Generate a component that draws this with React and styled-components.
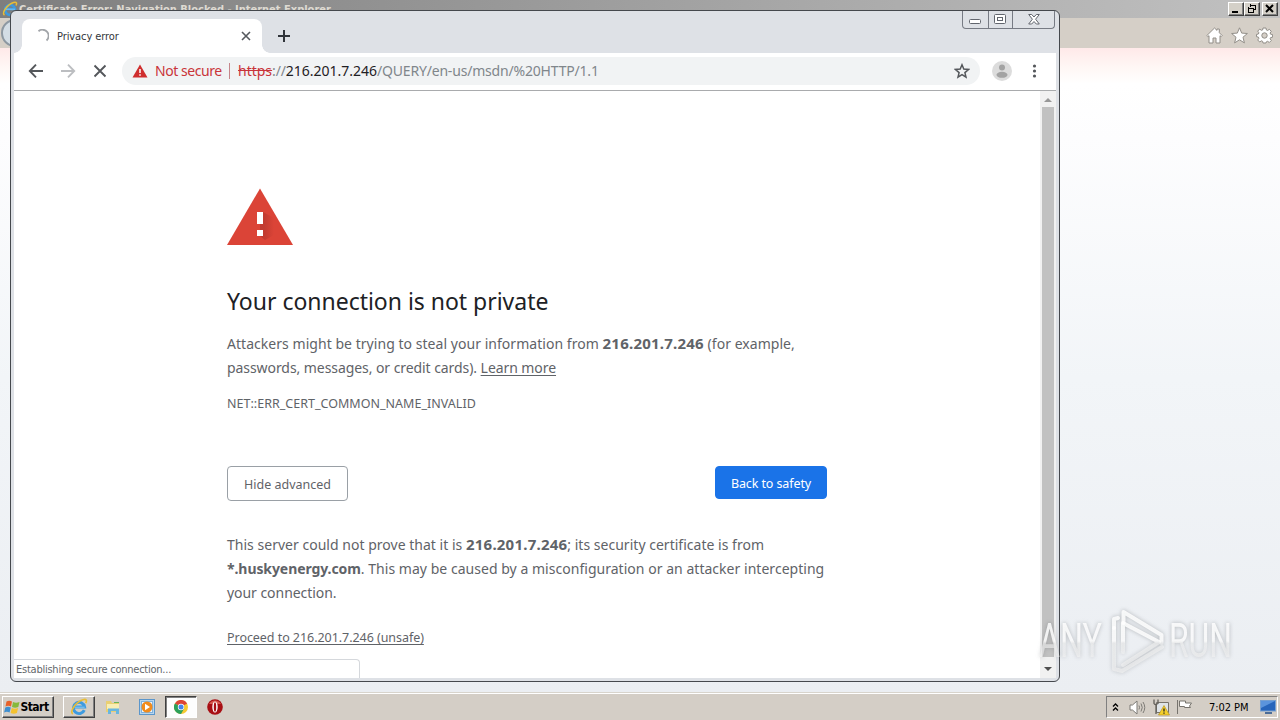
import React from "react";
import styled, { createGlobalStyle } from "styled-components";

const ui = `"DejaVu Sans Condensed", "DejaVu Sans", sans-serif`;
const segoe = `"Noto Sans", "Open Sans", sans-serif`;

const Global = createGlobalStyle`
  * { box-sizing: border-box; }
  body { margin: 0; overflow: hidden; font-family: ${ui}; }
  svg { display: block; flex: none; }
`;

const Desktop = styled.div`
  position: relative;
  width: 1280px;
  height: 720px;
  display: flex;
  flex-direction: column;
  overflow: hidden;
`;
const IeTitle = styled.div`
  height: 18px;
  flex: none;
  display: flex;
  align-items: center;
  padding: 0 2px;
  gap: 1px;
  background: linear-gradient(90deg, #7e7e7e, #c1c1c1);
`;
const IeTitleText = styled.div`
  flex: 1;
  font: bold 11px/18px ${ui};
  padding-top: 1px;
  color: #dedad2;
  letter-spacing: ${(p) => p.$ls}px;
  white-space: nowrap;
`;
const ClassicButton = styled.div`
  width: 16px;
  height: 14px;
  margin-left: ${(p) => p.$gap || 0}px;
  background: #d4d0c8;
  border: 1px solid;
  border-color: #fff #404040 #404040 #fff;
  box-shadow: inset -1px -1px #808080;
`;
const IeBar = styled.div`
  height: 30px;
  flex: none;
  display: flex;
  align-items: center;
  justify-content: flex-end;
  gap: 8px;
  padding: 4px 7px 0 0;
  background: #d5cfc7;
`;
const BackOrb = styled.div`
  width: 28px;
  height: 28px;
  margin: -5px auto 0 1px;
  border-radius: 50%;
  border: 2px solid #8d98a2;
  background: #d3dde5;
`;
const IePage = styled.div`
  flex: 1;
  background: linear-gradient(180deg, #ffe9e9 0, #fff6f4 18px, #fff 36px, #fdfdfe 90px, #f2f5f8 330px, #ebeef2 100%);
`;
const Taskbar = styled.div`
  height: 28px;
  flex: none;
  display: flex;
  align-items: flex-start;
  padding: 3px 2px 0 2px;
  background: #d4cec6;
  border-top: 1px solid #d8d4cc;
  box-shadow: inset 0 1px #fff;
`;
const TaskButton = styled.div`
  width: ${(p) => p.$w}px;
  height: 22px;
  margin-left: ${(p) => p.$gap || 0}px;
  display: flex;
  align-items: center;
  justify-content: center;
  font: bold 12px/20px ${ui};
  letter-spacing: -0.5px;
  color: #000;
  border: 1px solid transparent;
  ${(p) => p.$kind === "raised" && `border-color: #fff #404040 #404040 #fff; box-shadow: inset -1px -1px #808080;`}
  ${(p) => p.$kind === "pressed" && `border-color: #404040 #fff #fff #404040; box-shadow: inset 1px 1px #808080; background: #fdfdfd;`}
`;
const StartLabel = styled.span`
  margin-right: 3px;
`;
const Tray = styled.div`
  width: 172px;
  height: 22px;
  margin-left: auto;
  display: flex;
  align-items: center;
  padding-left: 5px;
  border: 1px solid;
  border-color: #808080 #fff #fff #808080;
`;
const Clock = styled.div`
  width: 41px;
  margin: 1px 10px 0 16px;
  font: 11px/20px ${ui};
  letter-spacing: ${(p) => p.$ls}px;
  white-space: nowrap;
  color: #000;
`;

const Window = styled.div`
  position: absolute;
  left: 10px;
  top: 10px;
  width: 1050px;
  height: 672px;
  padding: 0 3px 3px;
  display: flex;
  flex-direction: column;
  border: 1px solid #45484d;
  border-radius: 6px;
  background: #dee1e6;
  overflow: hidden;
`;
const TabStrip = styled.div`
  height: 42px;
  flex: none;
  display: flex;
  align-items: flex-end;
`;
const TabFoot = styled.div`
  width: 8px;
  height: 8px;
  background: radial-gradient(circle at ${(p) => p.$at} 0, transparent 7.5px, #fff 8px);
`;
const Tab = styled.div`
  width: 240px;
  height: 34px;
  display: flex;
  align-items: center;
  padding: 0 11px 0 13px;
  background: #fff;
  border-radius: 8px 8px 0 0;
`;
const TabTitle = styled.div`
  flex: 1;
  margin: 2px 0 0 8px;
  font: 11px/16px ${ui};
  letter-spacing: ${(p) => p.$ls}px;
  color: #33363a;
`;
const NewTab = styled.div`
  margin: 0 0 10px 7px;
`;
const Controls = styled.div`
  width: 93px;
  height: 18px;
  margin: 0 1px auto auto;
  display: flex;
  border: 1px solid #777b84;
  border-top: 0;
  border-radius: 0 0 4px 4px;
  & > * + * { border-left: 1px solid #777b84; }
`;
const Control = styled.div`
  width: ${(p) => p.$w}px;
  padding-top: ${(p) => p.$drop || 0}px;
  display: flex;
  align-items: center;
  justify-content: center;
`;
const Toolbar = styled.div`
  height: 38px;
  flex: none;
  display: flex;
  align-items: center;
  padding: 0 14px 1px 12px;
  background: #fff;
  border-bottom: 1px solid #a9abad;
`;
const Nav = styled.div`
  display: flex;
  gap: 12px;
  width: 96px;
`;
const Omnibox = styled.div`
  width: 858px;
  height: 28px;
  display: flex;
  align-items: center;
  padding: 0 10px;
  border-radius: 14px;
  background: #f1f3f4;
  font: 14px/28px ${segoe};
  color: #80868b;
  white-space: nowrap;
`;
const Warn = styled.span`
  margin-left: 7px;
  width: 67px;
  color: #c9343a;
  letter-spacing: ${(p) => p.$ls}px;
`;
const Divider = styled.i`
  width: 1px;
  height: 16px;
  margin: 0 8px 0 7px;
  background: #c5868b;
`;
const Url = styled.span`
  flex: 1;
  letter-spacing: ${(p) => p.$ls}px;
  & s { color: #c9343a; letter-spacing: 0; }
  & b { font-weight: 400; color: #1f2124; letter-spacing: 0; }
`;
const Avatar = styled.div`
  margin: 0 14px 0 12px;
`;

const View = styled.div`
  flex: 1;
  display: flex;
  min-height: 0;
  background: #fff;
`;
const Page = styled.main`
  flex: 1;
  padding: 97px 0 0 213px;
  font-family: ${segoe};
  color: #5f6368;
`;
const Column = styled.div`
  width: 600px;
`;
const Heading = styled.h1`
  margin: 39px 0 0;
  font: 400 23px/32px ${segoe};
  letter-spacing: ${(p) => p.$ls}px;
  color: #202124;
  white-space: nowrap;
`;
const Para = styled.div`
  margin-top: ${(p) => p.$mt}px;
  font-size: 14px;
  line-height: 24px;
`;
const Line = styled.div`
  height: 24px;
  white-space: nowrap;
  letter-spacing: ${(p) => p.$ls}px;
`;
const Host = styled.b`
  font-weight: 700;
  font-size: ${(p) => (p.$digits ? 15 : 14)}px;
  line-height: 20px;
  letter-spacing: ${(p) => (p.$digits ? 0.22 : -0.08)}px;
`;
const Small = styled.div`
  margin-top: ${(p) => p.$mt}px;
  font-size: 12.5px;
  line-height: 20px;
  height: 20px;
  white-space: nowrap;
  letter-spacing: ${(p) => p.$ls}px;
`;
const Link = styled.span`
  text-decoration: underline;
  text-underline-offset: 2px;
`;
const Buttons = styled.div`
  margin-top: 52px;
  height: 35px;
  display: flex;
  justify-content: space-between;
  align-items: flex-start;
`;
const Button = styled.div`
  width: ${(p) => (p.$primary ? 112 : 121)}px;
  height: ${(p) => (p.$primary ? 33 : 35)}px;
  border-radius: 4px;
  border: 1px solid ${(p) => (p.$primary ? "#1a73e8" : "#9aa0a6")};
  background: ${(p) => (p.$primary ? "#1a73e8" : "#fff")};
  color: ${(p) => (p.$primary ? "#fff" : "#5f6368")};
  font: 12.5px/${(p) => (p.$primary ? 34 : 36)}px ${segoe};
  letter-spacing: ${(p) => p.$ls}px;
  text-align: center;
  white-space: nowrap;
`;
const Scrollbar = styled.div`
  width: 16px;
  display: flex;
  flex-direction: column;
  align-items: center;
  justify-content: space-between;
  padding: 6px 0;
  background: #f1f1f1;
`;
const Thumb = styled.div`
  width: 12px;
  height: 550px;
  margin-top: 4px;
  margin-bottom: auto;
  background: #c1c1c1;
`;
const Status = styled.div`
  position: absolute;
  left: 3px;
  bottom: 3px;
  width: 346px;
  height: 19px;
  padding-left: 2px;
  border: 1px solid #d5d8dc;
  border-left: 0;
  border-bottom: 0;
  border-radius: 0 4px 0 0;
  background: #fff;
  font: 11px/19px ${ui};
  letter-spacing: ${(p) => p.$ls}px;
  color: #63676b;
`;
const Watermark = styled.svg`
  position: absolute;
  left: 1030px;
  top: 600px;
  filter: drop-shadow(0 0 2px rgba(70, 75, 80, 0.4));
`;

const IeIcon = ({ size }) => (
  <svg width={size} height={size} viewBox="0 0 16 16" fill="none">
    <path d="M12.700 10.800A5 5 0 1 1 13 8H4" stroke="#3d9be0" strokeWidth="2.600" />
    <path d="M4 8.200h9" stroke="#7fc6f3" strokeWidth="1" />
    <path d="M2.500 14.200C-.5 12 5 3.500 11.500 1.500c3.500-1 3.500 1 2.500 3" stroke="#e9bd35" strokeWidth="1.500" />
  </svg>
);

const Classic = ({ kind }) => (
  <svg width="14" height="12" shapeRendering="crispEdges" fill="none" stroke="#000">
    {kind === "min" && <path d="M3 9h6" strokeWidth="2" />}
    {kind === "restore" && <path d="M5 2h6M5.500 1v3M10.500 2v5M8 6.500h3M3 5h6M3.500 4v6M8.500 5v5M3 9.500h6" />}
    {kind === "close" && <path d="M3 2l7 7M10 2l-7 7" strokeWidth="2" shapeRendering="auto" />}
  </svg>
);

function IeWindow() {
  return (
    <>
      <IeTitle>
        <IeIcon size={16} />
        <IeTitleText $ls={0}>Certificate Error: Navigation Blocked - Internet Explorer</IeTitleText>
        <ClassicButton><Classic kind="min" /></ClassicButton>
        <ClassicButton $gap={-1}><Classic kind="restore" /></ClassicButton>
        <ClassicButton $gap={1}><Classic kind="close" /></ClassicButton>
      </IeTitle>
      <IeBar>
        <BackOrb />
        <svg width="17" height="17" viewBox="0 0 17 17" fill="#fff" stroke="#928e88">
          <path d="M.8 8.600 8.500 1l2.500 2.400V2h2.300v3.700l2.900 2.900-1 1-1.200-.9V16h-4v-5H7v5H3V8.700l-1.200.9z" />
        </svg>
        <svg width="17" height="17" viewBox="0 0 17 17" fill="#fff" stroke="#928e88">
          <path d="M8.500.8l2.200 5.300 5.700.4-4.400 3.700 1.400 5.700-4.900-3.100-4.900 3.100L5 10.200.6 6.500l5.700-.4z" />
        </svg>
        <svg width="17" height="17" viewBox="0 0 17 17" fill="#fff" stroke="#928e88">
          <path d="M7 1h3l.4 2 1.200.5 1.700-1.200 2 2-1.200 1.700.5 1.200 2 .4v2.600l-2 .4-.5 1.200 1.200 1.700-2 2-1.700-1.200-1.200.5L10 16H7l-.4-1.700-1.200-.5-1.700 1.200-2-2 1.200-1.700-.5-1.200-1.900-.4V7.400l1.900-.4.5-1.200-1.200-1.700 2-2 1.700 1.200L6.600 3z" />
          <circle cx="8.500" cy="8.500" r="2.700" fill="#d5cfc7" />
        </svg>
      </IeBar>
      <IePage />
    </>
  );
}

function TabBar() {
  return (
    <TabStrip>
      <TabFoot $at="0" />
      <Tab>
        <svg width="14" height="14" viewBox="0 0 14 14" fill="none">
          <path d="M3.500 2.200A6 6 0 0 1 11.500 11.500" stroke="#a2a5a9" strokeWidth="1.800" />
        </svg>
        <TabTitle $ls={-0.08}>Privacy error</TabTitle>
        <svg width="10" height="10" stroke="#55595e" strokeWidth="1.600"><path d="M1 1l8 8M9 1L1 9" /></svg>
      </Tab>
      <TabFoot $at="100%" />
      <NewTab>
        <svg width="14" height="14" stroke="#30343a" strokeWidth="2"><path d="M7 1v12M1 7h12" /></svg>
      </NewTab>
      <Controls>
        <Control $w={25} $drop={3}>
          <svg width="14" height="8" fill="#fff" stroke="#62666e"><rect x="1.500" y="2.500" width="11" height="4" rx="1" /></svg>
        </Control>
        <Control $w={25}>
          <svg width="13" height="11" fill="#fff" stroke="#62666e"><rect x=".5" y=".5" width="11" height="9" rx="1" /><rect x="3.500" y="3.500" width="5" height="3" /></svg>
        </Control>
        <Control $w={42}>
          <svg width="12" height="11" fill="#fff" stroke="#62666e"><path d="M.7.5h3L6 3 8.300.5h3L7.600 5.200l3.700 4.800h-3L6 7.500 3.700 10h-3l3.700-4.800z" /></svg>
        </Control>
      </Controls>
    </TabStrip>
  );
}

function AddressBar() {
  return (
    <Toolbar>
      <Nav>
        <svg width="20" height="20" viewBox="0 0 20 20" fill="none" stroke="#54575b" strokeWidth="1.900"><path d="M17 10H4M10 3.700 3.800 10l6.200 6.300" /></svg>
        <svg width="20" height="20" viewBox="0 0 20 20" fill="none" stroke="#bcbec1" strokeWidth="1.900"><path d="M3 10h13M10 3.700l6.200 6.300L10 16.300" /></svg>
        <svg width="20" height="20" viewBox="0 0 20 20" stroke="#54575b" strokeWidth="1.900"><path d="M4.500 4.500l11 11M15.500 4.500l-11 11" /></svg>
      </Nav>
      <Omnibox>
        <svg width="16" height="14" viewBox="0 0 16 14"><path d="M8 .5 15.500 13.500H.5z" fill="#cf2e2e" /><path d="M8 5v4M8 10.200v1.600" stroke="#fff" strokeWidth="1.500" /></svg>
        <Warn $ls={-0.45}>Not secure</Warn>
        <Divider />
        <Url $ls={-0.19}><s>https</s>://<b>216.201.7.246</b>/QUERY/en-us/msdn/%20HTTP/1.1</Url>
        <svg width="16" height="16" viewBox="0 0 16 16" fill="none" stroke="#54575b" strokeWidth="1.500"><path d="M8 1.800l1.800 4.300 4.700.4-3.600 3.100 1.100 4.600L8 11.700l-4 2.500 1.100-4.600L1.500 6.500l4.700-.4z" /></svg>
      </Omnibox>
      <Avatar>
        <svg width="20" height="20"><circle cx="10" cy="10" r="10" fill="#dcdcdc" /><circle cx="10" cy="6.500" r="3" fill="#a3a3a3" /><ellipse cx="10" cy="13.800" rx="5.500" ry="3" fill="#a3a3a3" /></svg>
      </Avatar>
      <svg width="16" height="16" fill="#54575b"><circle cx="8.500" cy="3" r="1.600" /><circle cx="8.500" cy="8" r="1.600" /><circle cx="8.500" cy="13" r="1.600" /></svg>
    </Toolbar>
  );
}

function Interstitial() {
  return (
    <Page>
      <Column>
        <svg width="66" height="58" viewBox="0 0 66 58">
          <defs>
            <linearGradient id="shade" x1="0" y1="0" x2="1" y2="0">
              <stop offset="0.3" stopColor="#a8322a" stopOpacity=".5" />
              <stop offset="1" stopColor="#a8322a" stopOpacity="0" />
            </linearGradient>
          </defs>
          <path d="M33 .5 66 57H0z" fill="#db4437" />
          <path d="M33 24h3l11 6v17l-9 5-5-4z" fill="url(#shade)" />
          <path d="M30 24h6v12h-6zM30 42h6v6h-6z" fill="#fff" />
        </svg>
        <Heading $ls={-0.02}>Your connection is not private</Heading>
        <Para $mt={15}>
          <Line $ls={0.04}>Attackers might be trying to steal your information from <Host $digits>216.201.7.246</Host> (for example,</Line>
          <Line $ls={-0.07}>passwords, messages, or credit cards). <Link>Learn more</Link></Line>
        </Para>
        <Small $mt={14} $ls={0.02}>NET::ERR_CERT_COMMON_NAME_INVALID</Small>
        <Buttons>
          <Button $ls={0}>Hide advanced</Button>
          <Button $primary $ls={-0.1}>Back to safety</Button>
        </Buttons>
        <Para $mt={32}>
          <Line $ls={0.02}>This server could not prove that it is <Host $digits>216.201.7.246</Host>; its security certificate is from</Line>
          <Line $ls={0.03}><Host>*.huskyenergy.com</Host>. This may be caused by a misconfiguration or an attacker intercepting</Line>
          <Line $ls={-0.05}>your connection.</Line>
        </Para>
        <Small $mt={23} $ls={-0.05}><Link>Proceed to 216.201.7.246 (unsafe)</Link></Small>
      </Column>
    </Page>
  );
}

function ChromeWindow() {
  return (
    <Window>
      <TabBar />
      <AddressBar />
      <View>
        <Interstitial />
        <Scrollbar>
          <svg width="8" height="6" fill="#989898"><path d="M0 5l4-4 4 4z" /></svg>
          <Thumb />
          <svg width="8" height="6" fill="#505050"><path d="M0 1l4 4 4-4z" /></svg>
        </Scrollbar>
      </View>
      <Status $ls={-0.24}>Establishing secure connection...</Status>
    </Window>
  );
}

const WindowsFlag = () => (
  <svg width="16" height="16" viewBox="0 0 16 16">
    <path d="M2.500 2.500c2-1.200 3.500-1 5.500 0L7 7.500c-2-1-3.500-1-5.500 0z" fill="#e8622a" />
    <path d="M9 3c2 1 4 1 6.500 0l-1.200 5c-2 1-4.300 1-6.300 0z" fill="#86b93b" />
    <path d="M1.300 8.500c2-1 3.500-1 5.500 0l-1.200 5c-2-1-3.600-1-5.500 0z" fill="#3f8fd0" />
    <path d="M7.800 9c2 1 4.200 1 6.300 0l-1.200 5c-2 1-4.200 1-6.300 0z" fill="#f4c22f" />
  </svg>
);

function TaskbarRow() {
  return (
    <Taskbar>
      <TaskButton $kind="raised" $w={52}><WindowsFlag /><StartLabel>Start</StartLabel></TaskButton>
      <TaskButton $kind="raised" $w={32} $gap={9}><IeIcon size={18} /></TaskButton>
      <TaskButton $w={32} $gap={2}>
        <svg width="16" height="16" viewBox="0 0 16 16">
          <path d="M1 2h5l1 2h7v9H1z" fill="#e9cf72" />
          <path d="M2 5h12v5H2z" fill="#f8eeb4" />
          <path d="M3 15V9.500h11V15h-3v-3H6v3z" fill="#69b6df" />
          <path d="M9 3h5v1H9z" fill="#67b55c" />
        </svg>
      </TaskButton>
      <TaskButton $w={32} $gap={2}>
        <svg width="16" height="16" viewBox="0 0 16 16">
          <rect x=".5" y=".5" width="15" height="15" fill="#b8d6ee" stroke="#5b96cb" />
          <rect x="2.500" y="2.500" width="11" height="11" fill="#eef6fc" stroke="#7fb1dc" />
          <circle cx="8" cy="8" r="5.500" fill="#f18b1c" /><path d="M6 4.800 11 8l-5 3.200z" fill="#fff" />
        </svg>
      </TaskButton>
      <TaskButton $kind="pressed" $w={32} $gap={2}>
        <svg width="14" height="14" viewBox="0 0 14 14">
          <circle cx="7" cy="7" r="7" fill="#f5c932" />
          <path d="M7 7 .9 3.500A7 7 0 0 1 13.100 3.500z" fill="#dc4437" />
          <path d="M.9 3.500A7 7 0 0 0 7 14l3-5.300L7 7z" fill="#2ca05a" />
          <circle cx="7" cy="7" r="3.200" fill="#fff" /><circle cx="7" cy="7" r="2.500" fill="#4484ec" />
        </svg>
      </TaskButton>
      <TaskButton $w={32} $gap={2}>
        <svg width="16" height="16" viewBox="0 0 16 16"><circle cx="8" cy="8" r="7.800" fill="#a80f14" /><path d="M2 5a7 7 0 0 1 12 0z" fill="#d75a50" /><ellipse cx="8" cy="8" rx="2.700" ry="5.500" fill="#fff" /><ellipse cx="8" cy="8" rx="1.200" ry="4.700" fill="#a80f14" /></svg>
      </TaskButton>
      <Tray>
        <svg width="8" height="10" fill="none" stroke="#000" strokeWidth="1.300"><path d="M1 4.500 3.500 2 6 4.500M1 8.500 3.500 6 6 8.500" /></svg>
        <svg width="53" height="18" viewBox="0 0 53 18">
          <g transform="translate(9 1)" fill="none" stroke="#7d7b76"><path d="M1 6h2.500L8 2v13l-4.500-4H1z" fill="#fff" /><path d="M10 6.500q1 2 0 4M12 4.500q2.500 4 0 8M14 3q3.500 5.500 0 11" /></g>
          <g transform="translate(33 1)"><path d="M3.500 3.500h12v10h-12z" fill="#dfe4e8" stroke="#77736b" /><path d="M1 .5v4q1 2 4 0v-4M3 6v9" fill="none" stroke="#625f59" strokeWidth="1.300" /><path d="M11 6.500 16.500 16H5.500z" fill="#f4cf2b" stroke="#b28c12" strokeWidth=".6" /><path d="M11 9.500v3M11 13.500v1.200" stroke="#222" strokeWidth="1.300" /></g>
        </svg>
        <svg width="20" height="18" viewBox="0 0 20 18" fill="#fff" stroke="#77746e"><path d="M4.500 2v14M6.500 3h6v2h6l-2 3 1 1.500h-6v-1h-5z" /></svg>
        <Clock $ls={-0.05}>7:02 PM</Clock>
        <svg width="16" height="14" viewBox="0 0 16 14"><rect x=".5" y=".5" width="15" height="10.500" fill="#2765bb" stroke="#77a0d0" /><path d="M1 1h14L1 8z" fill="#5b94dc" /><path d="M5 12h7v2H5z" fill="#4c6d98" /></svg>
      </Tray>
    </Taskbar>
  );
}

function Brand() {
  return (
    <Watermark width="250" height="80" fill="url(#sheen)" fontFamily="Roboto, sans-serif" fontSize="48">
      <defs>
        <linearGradient id="sheen" gradientUnits="userSpaceOnUse" x1="0" y1="10" x2="0" y2="72">
          <stop offset="0.5" stopColor="#fff" stopOpacity=".85" />
          <stop offset="0.54" stopColor="#f4f4f4" stopOpacity=".6" />
        </linearGradient>
      </defs>
      <text x="9" y="57" textLength="63" lengthAdjust="spacingAndGlyphs">ANY</text>
      <g fill="none" stroke="url(#sheen)" strokeWidth="4" strokeLinejoin="round" strokeLinecap="round">
        <path d="M93 52V23l36 19-36 23" />
        <path d="M84 28v41l8 2 40-24" />
        <path d="M93.500 23V12l38 23v8" />
        <path d="M84 28V19l4-1" />
      </g>
      <text x="139" y="57" textLength="63" lengthAdjust="spacingAndGlyphs">RUN</text>
    </Watermark>
  );
}

export default function App() {
  return (
    <Desktop>
      <Global />
      <IeWindow />
      <TaskbarRow />
      <ChromeWindow />
      <Brand />
    </Desktop>
  );
}
